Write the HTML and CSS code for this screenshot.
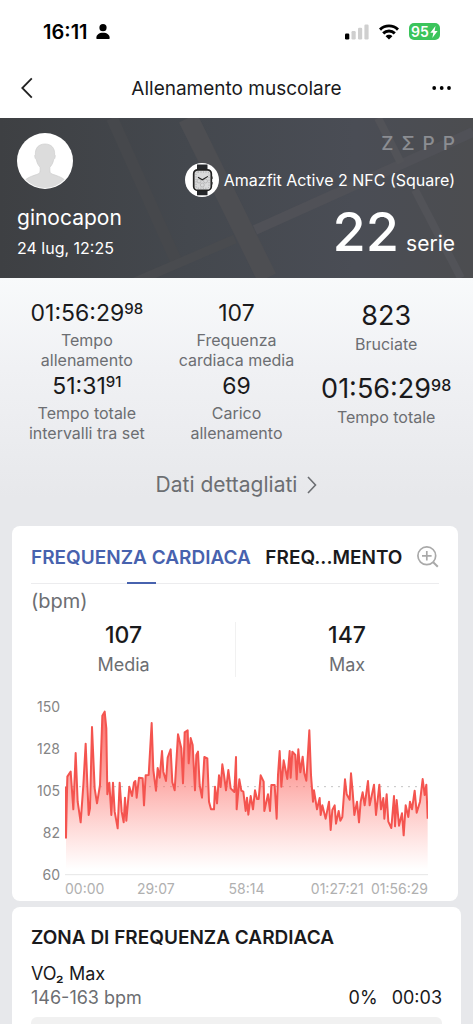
FILE: index.html
```html
<!DOCTYPE html>
<html lang="it">
<head>
<meta charset="utf-8">
<meta name="viewport" content="width=device-width, initial-scale=1">
<title>Allenamento muscolare</title>
<link rel="stylesheet" href="styles.css">
</head>
<body>
<div class="status">
  <div class="status-left">
    <span class="clock">16:11</span>
    <svg class="person" width="14" height="15" viewBox="0 0 14 15" aria-hidden="true"><circle cx="7" cy="3.7" r="3.6"/><path d="M0.3 14.2C0.3 10.800 3 8.800 7 8.800s6.700 2 6.700 5.400c0 .5-.3.8-.8.8H1.100c-.5 0-.8-.3-.8-.8z"/></svg>
  </div>
  <div class="status-right">
    <svg width="24" height="16" viewBox="0 0 24 16" aria-hidden="true"><rect x="0" y="9.500" width="4.300" height="6" rx="1.200"/><g fill="#cfcfcf"><rect x="6.500" y="7" width="4.200" height="8.500" rx="1.200"/><rect x="13" y="3.700" width="4.200" height="11.800" rx="1.200"/><rect x="19.400" y="0.500" width="4.200" height="15" rx="1.200"/></g></svg>
    <svg width="20" height="16" viewBox="0 0 20 16" aria-hidden="true"><g fill="none" stroke="#000" stroke-width="2.900"><path d="M1 5.600C6 .6 14 .6 19 5.600"/><path d="M4.200 9.400c3.300-3.300 8.300-3.300 11.600 0"/></g><path d="M10 15.600 6.600 12.200c1.900-1.800 4.900-1.800 6.800 0z"/></svg>
    <div class="battery"><span>95</span><svg width="8" height="12" viewBox="0 0 8 12" aria-hidden="true"><path fill="#fff" d="M5.500 0 .3 6.700h3L2.300 12l5.300-6.900h-3z"/></svg></div>
  </div>
</div>

<header class="nav">
  <button class="icon-btn" aria-label="Indietro"><svg width="12" height="22" viewBox="0 0 12 22"><path d="M10.800 1.300 1.300 11l9.500 9.700" fill="none" stroke="#222" stroke-width="1.800"/></svg></button>
  <h1>Allenamento muscolare</h1>
  <button class="icon-btn more" aria-label="Altro"><svg width="20" height="4" viewBox="0 0 20 4"><circle cx="2.200" cy="2" r="1.900"/><circle cx="9.700" cy="2" r="1.900"/><circle cx="17" cy="2" r="1.900"/></svg></button>
</header>

<section class="hero">
  <svg class="hero-map" viewBox="0 0 473 160" preserveAspectRatio="none" aria-hidden="true"><g fill="none" stroke="#4d4e52"><path d="M188 0 267 160" stroke-width="20"/><path d="M112 0 177 145" stroke-width="12" stroke="#46484c"/><path d="M135 164 L235 121" stroke-width="9" stroke="#494b4f"/><path d="M255 112 473 14" stroke-width="10" stroke="#505157"/><path d="M378 0 401 45M415 72 461 160" stroke-width="8" stroke="#525358"/></g></svg>
  <div class="user">
    <svg class="avatar" width="56" height="56" viewBox="0 0 56 56" role="img" aria-label="Avatar"><defs><clipPath id="av"><circle cx="28" cy="28" r="27"/></clipPath></defs><circle cx="28" cy="28" r="28" fill="#fff"/><path clip-path="url(#av)" fill="#dcdcdc" stroke="#cecece" stroke-width=".7" d="M28 11c-6.500 0-10 4.200-9.600 10.500-1.200.4-.6 4.500 1 5.200.5 3.300 2 5.800 3.700 7.600.2 2.800.1 5.200-.9 6-2.300 1.900-12.400 3-15.700 9V60h43V49.300c-3.300-6-13.400-7.100-15.700-9-1-.8-1.100-3.200-.9-6 1.700-1.800 3.200-4.300 3.700-7.600 1.600-.7 2.200-4.800 1-5.200C38 15.200 34.500 11 28 11z"/></svg>
    <div class="name">ginocapon</div>
    <div class="date">24 lug, 12:25</div>
  </div>
  <div class="summary">
    <div class="brand"><span>Z</span><span>Σ</span><span>P</span><span>P</span></div>
    <div class="device">
      <svg width="34" height="34" viewBox="0 0 34 34" aria-hidden="true"><circle cx="17" cy="17" r="17" fill="#fff"/><path d="M12 1.500h10.500V8H12zM12 26h10.500v6.300H12z" fill="#25272a"/><rect x="8.700" y="6.800" width="17.600" height="20.600" rx="4" fill="#d9dadb" stroke="#222" stroke-width="1.700"/><rect x="11" y="9" width="13" height="16.200" rx="2" fill="none" stroke="#999" stroke-width=".8" stroke-dasharray="1 1.500"/><g fill="none" stroke="#aaa" stroke-width=".7"><circle cx="14" cy="18" r="2"/><circle cx="20.500" cy="18" r="2"/><circle cx="17.300" cy="22" r="2"/></g><path d="m13 14.300 4.300 2.500 5.600-3.400" fill="none" stroke="#222" stroke-width="1.100"/><path d="M27 13.500v2.500M27 19v2.500" stroke="#333" stroke-width="1.200"/></svg>
      <span>Amazfit Active 2 NFC (Square)</span>
    </div>
    <div class="sets"><strong>22</strong><span>serie</span></div>
  </div>
</section>

<div class="content">
  <section class="stats">
    <div class="stat"><div class="value">01:56:29<sup>98</sup></div><div class="label">Tempo<br>allenamento</div></div>
    <div class="stat"><div class="value">107</div><div class="label">Frequenza<br>cardiaca media</div></div>
    <div class="stat large"><div class="value">823</div><div class="label">Bruciate</div></div>
    <div class="stat"><div class="value">51:31<sup>91</sup></div><div class="label">Tempo totale<br>intervalli tra set</div></div>
    <div class="stat"><div class="value">69</div><div class="label">Carico<br>allenamento</div></div>
    <div class="stat large"><div class="value">01:56:29<sup>98</sup></div><div class="label">Tempo totale</div></div>
  </section>
  <a class="details" href="#dettagli">Dati dettagliati <svg width="10" height="18" viewBox="0 0 10 18" aria-hidden="true"><path d="m1 1 7.500 8L1 17" fill="none" stroke="#6c6e72" stroke-width="1.600"/></svg></a>

  <section class="card heart" id="dettagli">
    <div class="tabs">
      <button class="tab active">FREQUENZA CARDIACA</button>
      <button class="tab">FREQ...MENTO</button>
      <button class="zoom" aria-label="Ingrandisci"><svg width="22" height="22" viewBox="0 0 22 22"><g fill="none" stroke="#a9a9a9" stroke-width="1.700"><circle cx="9.800" cy="9.800" r="8.900"/><path d="M9.800 5v9.600M5 9.800h9.600"/><path d="m16.200 16.200 4.600 4.600" stroke-width="2"/></g></svg></button>
    </div>
    <div class="unit">(bpm)</div>
    <div class="averages">
      <div class="average"><strong>107</strong><span>Media</span></div>
      <div class="average"><strong>147</strong><span>Max</span></div>
    </div>
    <div class="chart">
      <div class="y-axis"><span>150</span><span>128</span><span>105</span><span>82</span><span>60</span></div>
      <svg class="plot" viewBox="0 0 1089 510" preserveAspectRatio="none" role="img" aria-label="Frequenza cardiaca nel tempo">
        <defs>
          <linearGradient id="fade" gradientUnits="userSpaceOnUse" x1="0" y1="20" x2="0" y2="490"><stop offset="0" stop-color="#fa5550" stop-opacity=".85"/><stop offset=".4" stop-color="#fb6862" stop-opacity=".6"/><stop offset="1" stop-color="#ff8078" stop-opacity="0"/></linearGradient>
          <path id="beats" d="M3 242 L3 395 7 212 17 197 25 310 32 141 38 287 47 349 55 237 62 113 71 327 75 307 81 63 89 247 96 292 105 237 112 29 119 17 124 67 127 265 133 230 139 327 144 230 149 317 158 367 164 230 170 317 176 349 180 275 184 344 193 242 201 270 207 229 211 225 215 275 222 215 233 217 237 298 242 208 251 207 260 51 265 192 273 254 278 186 284 215 291 135 295 197 303 225 308 155 317 130 322 229 329 253 339 85 349 127 354 232 359 79 368 73 371 172 377 96 383 117 390 253 394 147 399 137 404 237 411 275 418 153 427 157 432 287 438 310 447 310 450 242 456 292 462 208 467 243 472 175 477 207 483 253 490 192 497 247 508 258 513 153 515 310 523 220 529 254 535 257 542 315 546 275 550 326 557 270 564 310 570 253 576 279 581 279 587 208 596 227 598 315 609 265 615 315 619 237 629 237 635 338 639 207 644 135 649 242 656 163 667 219 674 135 677 215 682 137 691 147 695 220 700 130 706 199 713 152 718 202 724 224 733 73 738 207 744 287 747 253 756 310 764 276 767 327 772 298 782 338 792 287 797 372 802 312 809 298 813 353 821 315 826 344 832 333 840 220 845 265 854 281 858 202 863 257 868 327 876 287 882 349 887 287 893 259 899 298 909 225 914 298 927 236 933 327 943 236 948 310 955 276 958 338 965 265 970 347 979 366 987 270 990 361 995 282 1002 359 1011 322 1016 388 1022 298 1030 333 1035 287 1041 310 1049 254 1055 320 1065 287 1073 219 1079 267 1084 236 1088 338"/>
        </defs>
        <path d="M0 242H1089" class="mean"/>
        <path fill="url(#fade)" d="M3 507 V242 L7 212 17 197 25 310 32 141 38 287 47 349 55 237 62 113 71 327 75 307 81 63 89 247 96 292 105 237 112 29 119 17 124 67 127 265 133 230 139 327 144 230 149 317 158 367 164 230 170 317 176 349 180 275 184 344 193 242 201 270 207 229 211 225 215 275 222 215 233 217 237 298 242 208 251 207 260 51 265 192 273 254 278 186 284 215 291 135 295 197 303 225 308 155 317 130 322 229 329 253 339 85 349 127 354 232 359 79 368 73 371 172 377 96 383 117 390 253 394 147 399 137 404 237 411 275 418 153 427 157 432 287 438 310 447 310 450 242 456 292 462 208 467 243 472 175 477 207 483 253 490 192 497 247 508 258 513 153 515 310 523 220 529 254 535 257 542 315 546 275 550 326 557 270 564 310 570 253 576 279 581 279 587 208 596 227 598 315 609 265 615 315 619 237 629 237 635 338 639 207 644 135 649 242 656 163 667 219 674 135 677 215 682 137 691 147 695 220 700 130 706 199 713 152 718 202 724 224 733 73 738 207 744 287 747 253 756 310 764 276 767 327 772 298 782 338 792 287 797 372 802 312 809 298 813 353 821 315 826 344 832 333 840 220 845 265 854 281 858 202 863 257 868 327 876 287 882 349 887 287 893 259 899 298 909 225 914 298 927 236 933 327 943 236 948 310 955 276 958 338 965 265 970 347 979 366 987 270 990 361 995 282 1002 359 1011 322 1016 388 1022 298 1030 333 1035 287 1041 310 1049 254 1055 320 1065 287 1073 219 1079 267 1084 236 1088 338 V507Z"/>
        <use href="#beats" class="line"/>
        <path d="M0 506H1089" class="base"/>
      </svg>
      <div class="x-axis"><span>00:00</span><span>29:07</span><span>58:14</span><span>01:27:21</span><span>01:56:29</span></div>
    </div>
  </section>

  <section class="card zones">
    <h2>ZONA DI FREQUENZA CARDIACA</h2>
    <div class="zone-name">VO₂ Max</div>
    <div class="zone-row"><span class="range">146-163 bpm</span><span>0%</span><span>00:03</span></div>
    <div class="bar"></div>
  </section>
</div>
</body>
</html>
```
FILE: styles.css
```css
* { box-sizing: border-box; }
body {
  margin: 0;
  background: #e7e8eb;
  color: #1a1a1c;
  font-family: Inter, "Liberation Sans", sans-serif;
  overflow-x: hidden;
}
html { overflow: hidden; }
svg { display: block; flex: none; }
button {
  border: 0;
  padding: 0;
  background: none;
  font: inherit;
  color: inherit;
  cursor: pointer;
}
h1, h2 { margin: 0; }

.status {
  display: flex;
  justify-content: space-between;
  align-items: center;
  height: 58px;
  padding: 5px 33px 0 43px;
  background: #fff;
  color: #000;
}
.status-left { display: flex; align-items: center; gap: 8px; }
.status-right { display: flex; align-items: center; gap: 10px; }
.clock { font-size: 20px; font-weight: 600; }
.person { margin-left: 2px; }
.status-left { gap: 6px; }
.battery {
  display: flex;
  align-items: center;
  justify-content: center;
  gap: 1px;
  width: 31px;
  height: 17px;
  border-radius: 5px;
  background: #3bc45b;
  color: #fff;
  font-size: 14px;
  font-weight: 600;
}

.nav {
  display: grid;
  grid-template-columns: 40px 1fr 40px;
  align-items: center;
  height: 60px;
  padding: 0 21px;
  background: #fff;
}
.nav h1 { padding-top: 1px; text-align: center; font-size: 19px; font-weight: 400; line-height: 24px; }
.icon-btn { height: 40px; }
.more { justify-self: end; }

.hero {
  position: relative;
  display: flex;
  justify-content: space-between;
  height: 160px;
  padding: 15px 18px 0 17px;
  background: linear-gradient(90deg, #3e4043, #44484e 40%, #4a4d55 75%, #4c4d50);
  color: #fff;
}
.hero-map { position: absolute; inset: 0; width: 100%; height: 100%; }
.user, .summary { position: relative; }
.name { margin-top: 16px; font-size: 21px; line-height: 26px; }
.date { margin-top: 6px; font-size: 16px; line-height: 22px; }
.summary { display: flex; flex-direction: column; align-items: flex-end; }
.brand {
  display: flex;
  gap: 8px;
  color: #8b8d92;
  font-size: 19px;
  font-weight: 500;
  line-height: 22px;
}
.device { display: flex; align-items: center; gap: 5px; margin-top: 8px; font-size: 16px; }
.sets { display: flex; align-items: baseline; gap: 7px; margin-top: 5px; font-size: 21px; line-height: 60px; }
.sets strong { font-size: 54px; font-weight: 500; }

.content { background: linear-gradient(#f8fafb, #f0f1f4 90px, #e7e8eb 220px); }
.stats { display: grid; grid-template-columns: repeat(3, 1fr); padding: 21px 12px 0; }
.stat { text-align: center; white-space: nowrap; }
.value { font-size: 23px; line-height: 28px; }
.value sup { font-size: 15px; line-height: 0; vertical-align: 7px; font-weight: 500; }
.label { margin: 3px 0 2px; color: #6c6e72; font-size: 16px; line-height: 20px; }
.large .value { font-size: 27px; line-height: 34px; }
.large .value sup { font-size: 16px; }
.large .label { margin-top: 1px; }
.details {
  display: flex;
  align-items: center;
  justify-content: center;
  gap: 10px;
  padding: 26px 0 27px;
  color: #6c6e72;
  font-size: 21px;
  line-height: 28px;
  text-decoration: none;
}

.card { margin: 0 12px; background: #fff; border-radius: 8px; }
.heart { margin-right: 15px; padding: 0 19px 4px; }
.tabs {
  display: flex;
  justify-content: space-between;
  align-items: stretch;
  height: 58px;
  border-bottom: 1px solid #ececee;
}
.tab { position: relative; padding-top: 5px; font-size: 19px; font-weight: 600; white-space: nowrap; }
.active { color: #4762ae; }
.active::after {
  content: "";
  position: absolute;
  left: 50%;
  bottom: -1px;
  width: 29px;
  height: 2px;
  margin-left: -14px;
  background: #4762ae;
}
.zoom { padding-top: 4px; }
.unit { margin-top: 3px; color: #6c6e72; font-size: 20px; line-height: 28px; }
.averages { display: grid; grid-template-columns: 1fr 1fr; margin: 7px -19px 0; }
.average { display: flex; flex-direction: column; align-items: center; }
.average + .average { border-left: 1px solid #f1f1f1; }
.average strong { font-size: 23px; font-weight: 500; line-height: 26px; }
.average span { margin-top: 5px; color: #6c6e72; font-size: 18px; line-height: 24px; }

.chart {
  display: grid;
  grid-template-columns: 29px 1fr;
  column-gap: 5px;
  padding: 29px 11px 0 0;
}
.y-axis {
  display: flex;
  flex-direction: column;
  justify-content: space-between;
  margin: -8px 0;
  color: #858585;
  font-size: 14px;
  line-height: 18px;
  text-align: right;
}
.plot { width: 100%; height: 170px; }
.line { fill: none; stroke: #f4544f; stroke-width: 2; stroke-linejoin: round; }
.plot path { vector-effect: non-scaling-stroke; }
.mean { fill: none; stroke: #c4c4c4; stroke-width: 1; stroke-dasharray: 2 5; }
.base { fill: none; stroke: #e7e7e7; stroke-width: 1; }
.x-axis {
  grid-column: 2;
  display: grid;
  grid-template-columns: minmax(0, 1fr) repeat(3, minmax(0, 2fr)) minmax(0, 1fr);
  justify-items: center;
  margin-top: 4px;
  color: #b0b0b0;
  font-size: 14px;
  line-height: 17px;
  white-space: nowrap;
}
.x-axis span:first-child { justify-self: start; }
.x-axis span:last-child { justify-self: end; }

.zones { margin-top: 6px; padding: 19px 19px 20px; }
.zones h2 { font-size: 19px; font-weight: 600; line-height: 24px; }
.zone-name { margin-top: 12px; font-size: 18px; line-height: 24px; }
.zone-row { display: flex; gap: 14px; font-size: 18px; line-height: 24px; }
.range { flex: 1; color: #6c6e72; }
.bar { height: 20px; margin-top: 7px; border-radius: 6px; background: #f1f1f1; }
```
